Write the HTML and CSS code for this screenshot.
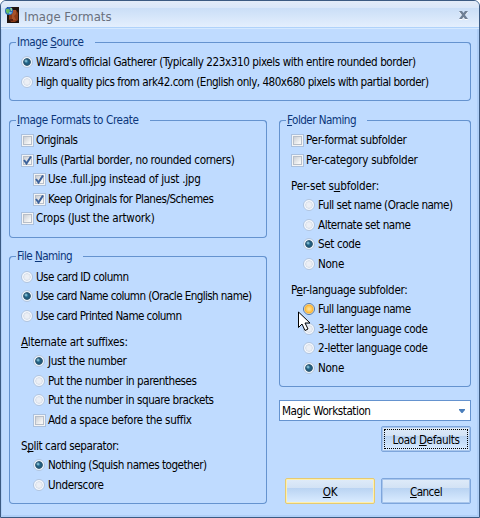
FILE: index.html
```html
<!DOCTYPE html>
<html lang="en">
<head>
<meta charset="utf-8">
<title>Image Formats</title>
<link rel="stylesheet" href="styles.css">
</head>
<body>
<div class="window">
  <header class="titlebar">
    <svg class="app-icon" width="14" height="16" viewBox="0 0 14 16">
      <rect width="12" height="16" x="2" fill="#20120d"/>
      <path d="M4 3h7l2 3v7l-3 2H6l-2-3z" fill="#8b3a16"/>
      <path d="M8 3h3v4l-2 2 2 4H7V7z" fill="#a7522a"/>
      <path d="M5 12h3v2H5z" fill="#5b2113"/>
      <circle cx="4" cy="4" r="4" fill="#2a68b8"/>
      <path d="M1 2h3l1 2-2 3-2-2z" fill="#62bd63"/>
      <path d="M5 1h2v3H6z" fill="#8fcf8d"/>
      <path d="M4 5h3l-1 2H4z" fill="#65b9de"/>
    </svg>
    <h1 data-w="87.5">Image Formats</h1>
    <svg class="close" width="11" height="10" viewBox="0 0 11 10">
      <path d="M1 2h3l1.500 2L7 2h3L7 6l3 4H7L5.500 8 4 10H1l3-4z" fill="#fff"/>
      <path d="M1 1h3l1.500 2L7 1h3L7 5l3 4H7L5.500 7 4 9H1l3-4z" fill="#6f7f95"/>
    </svg>
  </header>
  <main class="content">
    <section class="group source">
      <div class="legend"><i></i><b data-w="66.5">Image <u>S</u>ource</b><i></i></div>
      <div class="rows">
        <label><span class="radio on"></span><span data-w="379.5">Wizard's official Gatherer (Typically 223x310 pixels with entire rounded border)</span></label>
        <label><span class="radio"></span><span data-w="392.5">High quality pics from ark42.com (English only, 480x680 pixels with partial border)</span></label>
      </div>
    </section>
    <div class="columns">
      <div class="left">
        <section class="group create">
          <div class="legend"><i></i><b data-w="121.5"><u>I</u>mage Formats to Create</b><i></i></div>
          <div class="rows">
            <label><span class="check"></span><span data-w="41.5">Originals</span></label>
            <label><span class="check on"><svg width="9" height="9" viewBox="0 0 9 9"><path d="M1 4l2.500 3.500L8 .5"/></svg></span><span data-w="198.5">Fulls (Partial border, no rounded corners)</span></label>
            <label class="nested"><span class="check on"><svg width="9" height="9" viewBox="0 0 9 9"><path d="M1 4l2.500 3.500L8 .5"/></svg></span><span data-w="152.5">Use .full.jpg instead of just .jpg</span></label>
            <label class="nested"><span class="check on"><svg width="9" height="9" viewBox="0 0 9 9"><path d="M1 4l2.500 3.500L8 .5"/></svg></span><span data-w="165.5">Keep Originals for Planes/Schemes</span></label>
            <label><span class="check"></span><span data-w="118.5">Crops (Just the artwork)</span></label>
          </div>
        </section>
        <section class="group files">
          <div class="legend"><i></i><b data-w="55">File <u>N</u>aming</b><i></i></div>
          <div class="rows">
            <label><span class="radio"></span><span data-w="92.5">Use card ID column</span></label>
            <label><span class="radio on"></span><span data-w="215.5">Use card Name column (Oracle English name)</span></label>
            <label><span class="radio"></span><span data-w="145.5">Use card Printed Name column</span></label>
            <div class="caption"><span data-w="106.5"><u>A</u>lternate art suffixes:</span></div>
            <label class="nested"><span class="radio on"></span><span data-w="78.5">Just the number</span></label>
            <label class="nested"><span class="radio"></span><span data-w="148.5">Put the number in parentheses</span></label>
            <label class="nested"><span class="radio"></span><span data-w="165.5">Put the number in square brackets</span></label>
            <label class="nested"><span class="check"></span><span data-w="143.5">Add a space before the suffix</span></label>
            <div class="caption"><span data-w="98">S<u>p</u>lit card separator:</span></div>
            <label class="nested"><span class="radio on"></span><span data-w="158.5">Nothing (Squish names together)</span></label>
            <label class="nested"><span class="radio"></span><span data-w="55.5">Underscore</span></label>
          </div>
        </section>
      </div>
      <div class="right">
        <section class="group folders">
          <div class="legend"><i></i><b data-w="69"><u>F</u>older Naming</b><i></i></div>
          <div class="rows">
            <label><span class="check"></span><span data-w="100.5">Per-format subfolder</span></label>
            <label><span class="check"></span><span data-w="111.5">Per-category subfolder</span></label>
            <div class="caption"><span data-w="88">Per-set s<u>u</u>bfolder:</span></div>
            <label class="nested"><span class="radio"></span><span data-w="134.5">Full set name (Oracle name)</span></label>
            <label class="nested"><span class="radio"></span><span data-w="92.5">Alternate set name</span></label>
            <label class="nested"><span class="radio on"></span><span data-w="42.5">Set code</span></label>
            <label class="nested"><span class="radio"></span><span data-w="26">None</span></label>
            <div class="caption"><span data-w="116.5">P<u>e</u>r-language subfolder:</span></div>
            <label class="nested"><span class="radio hot"></span><span data-w="92.5">Full language name</span></label>
            <label class="nested"><span class="radio"></span><span data-w="109.5">3-letter language code</span></label>
            <label class="nested"><span class="radio"></span><span data-w="109.5">2-letter language code</span></label>
            <label class="nested"><span class="radio on"></span><span data-w="26">None</span></label>
          </div>
        </section>
        <div class="combo"><span data-w="88.5">Magic Workstation</span><svg width="6" height="4" viewBox="0 0 6 4"><path d="M0 0h6v1L3.500 4h-1L0 1z" fill="#4a7ebb"/></svg></div>
        <button class="btn focused"><span data-w="67">Load <u>D</u>efaults</span></button>
        <div class="actions">
          <button class="btn default"><span data-w="14.5"><u>O</u>K</span></button>
          <button class="btn"><span data-w="32"><u>C</u>ancel</span></button>
        </div>
      </div>
    </div>
  </main>
  <svg class="pointer" width="14" height="21" viewBox="0 0 14 21">
    <path d="M.5 1v15.500l3.500-3.500 3 6.500 3-1.500-3-6h5z" fill="#fff" stroke="#000"/>
  </svg>
</div>
<script src="script.js"></script>
</body>
</html>
```
FILE: styles.css
```css
* { box-sizing: border-box; }
body {
  margin: 0;
  background: #fff;
  font: 11.6px/20px "DejaVu Sans Condensed", "DejaVu Sans", sans-serif;
  font-stretch: condensed;
  color: #000;
}
.window {
  position: relative;
  width: 480px;
  height: 518px;
  border: 1px solid #3b5a82;
  border-radius: 6px 6px 0 0;
  background: #bfdbff;
  box-shadow: inset -2px -2px #b0cff7, inset 1px 0 #b0cff7;
  overflow: hidden;
}
.titlebar {
  display: flex;
  align-items: center;
  height: 28px;
  padding: 0 10px 0 4px;
  background: linear-gradient(#e3ebf8 0, #d9e7f9 7px, #cadef7 7px, #e4effd 26px, #afd2fa 26px, #afd2fa 27px, #d5e9ff 27px);
}
.app-icon { flex: none; margin-right: 5px; overflow: visible; }
h1 {
  margin: 4px auto 0 0;
  font-size: 13px;
  font-weight: 400;
  color: #69707d;
}
.content { padding: 13px 8px 0; }
.group {
  display: flow-root;
  border: 1px solid #6593cf;
  border-top: 0;
  border-radius: 4px;
}
.legend {
  display: flex;
  height: 20px;
  margin: -10px -1px 0;
  align-items: flex-start;
  color: #0b367a;
}
.legend b { font-weight: 400; margin: 0 11px 0 1px; }
.legend i { height: 5px; margin-top: 10px; border-top: 1px solid #6593cf; }
.legend i:first-child { width: 7px; border-left: 1px solid #6593cf; border-radius: 4px 0 0; }
.legend i:last-child { flex: 1; border-right: 1px solid #6593cf; border-radius: 0 4px 0 0; }
.source { height: 59px; }
.columns { display: flex; gap: 12px; margin-top: 19px; }
.left { width: 258px; }
.right { width: 192px; }
.create { height: 118px; }
.files { height: 248px; margin-top: 18px; }
.folders { height: 267px; }
.rows { display: grid; padding-left: 11px; }
.source .rows { grid-template-rows: 20px 20px; }
.create .rows { grid-template-rows: 20px 19px 20px 19px 20px; }
.files .rows {
  padding-top: 1px;
  grid-template-rows: 19px 20px 26px 19px 20px 19px 20px 26px 19px 20px 20px;
}
.folders .rows { grid-template-rows: 20px 26px 19px 20px 19px 20px 26px 19px 20px 19px 20px 20px; }
label {
  display: flex;
  align-items: center;
  gap: 2px;
  height: 20px;
}
label, .caption { white-space: nowrap; }
.caption { height: 20px; }
.nested { padding-left: 12px; }
.radio, .check { flex: none; width: 13px; height: 13px; }
.radio {
  width: 12px;
  height: 12px;
  margin-right: 1px;
  border: 1px solid #b2c6e0;
  border-radius: 50%;
  background: radial-gradient(circle, #eceff5 0 2px, #d9e0ea 3.500px, #f5f8fd 4px);
}
.radio.on {
  background:
    radial-gradient(circle at 4px 4px, #a5def0 0, transparent 2px),
    radial-gradient(circle at 50% 50%, #2c7ba0 0, #1f5c7e 2px, #2b5672 3.400px, #edf3fa 4.200px);
}
.radio.hot {
  border-color: #5579a8;
  background: radial-gradient(circle, #ffe5a0 0, #ffc650 3px, #f6ae34 4px, #fff1ca 5px);
}
.check {
  display: flex;
  align-items: center;
  justify-content: center;
  border: 1px solid #abc1de;
  background: linear-gradient(135deg, #cbcfd5, #f6f6f6 80%) 2px 2px / 7px 7px no-repeat, #f4f6f9;
  box-shadow: inset 0 0 0 1px #f4f4f4, inset 0 0 0 2px #b8bfc9;
}
.check svg { fill: none; stroke: #3c629c; stroke-width: 2; }
u { text-decoration: underline 1px; text-underline-offset: 1px; text-decoration-skip-ink: none; }
.combo {
  display: flex;
  align-items: center;
  justify-content: space-between;
  height: 21px;
  margin-top: 13px;
  padding: 1px 5px 0 2px;
  border: 1px solid #6593cf;
  background: #fff;
}
.btn {
  display: flex;
  align-items: center;
  justify-content: center;
  width: 90px;
  height: 26px;
  padding: 2px 0 0;
  border: 1px solid #7ea6dc;
  border-radius: 2px;
  background: linear-gradient(#dfebf9 0, #d2e2f5 9px, #b9d3f2 9px, #d9ebff 23px);
  box-shadow: inset 0 0 0 1px #a9c6ec;
  font: inherit;
  color: inherit;
}
.btn.focused {
  margin: 5px 0 0 auto;
  outline: 1px dotted #000;
  outline-offset: -4px;
}
.btn.default { border-color: #e5ca72; box-shadow: inset 0 0 0 1px #fff0ad; }
.actions { display: flex; justify-content: space-between; margin: 26px 0 0 6px; }
.pointer { position: absolute; left: 297px; top: 310px; }
```
FILE: script.js
```js
// Track each string so that it fills its designed width.
document.querySelectorAll("[data-w]").forEach((el) => {
  const natural = el.getBoundingClientRect().width;
  const spacing = (Number(el.dataset.w) - natural) / el.textContent.length;
  el.style.letterSpacing = spacing.toFixed(3) + "px";
});
```
